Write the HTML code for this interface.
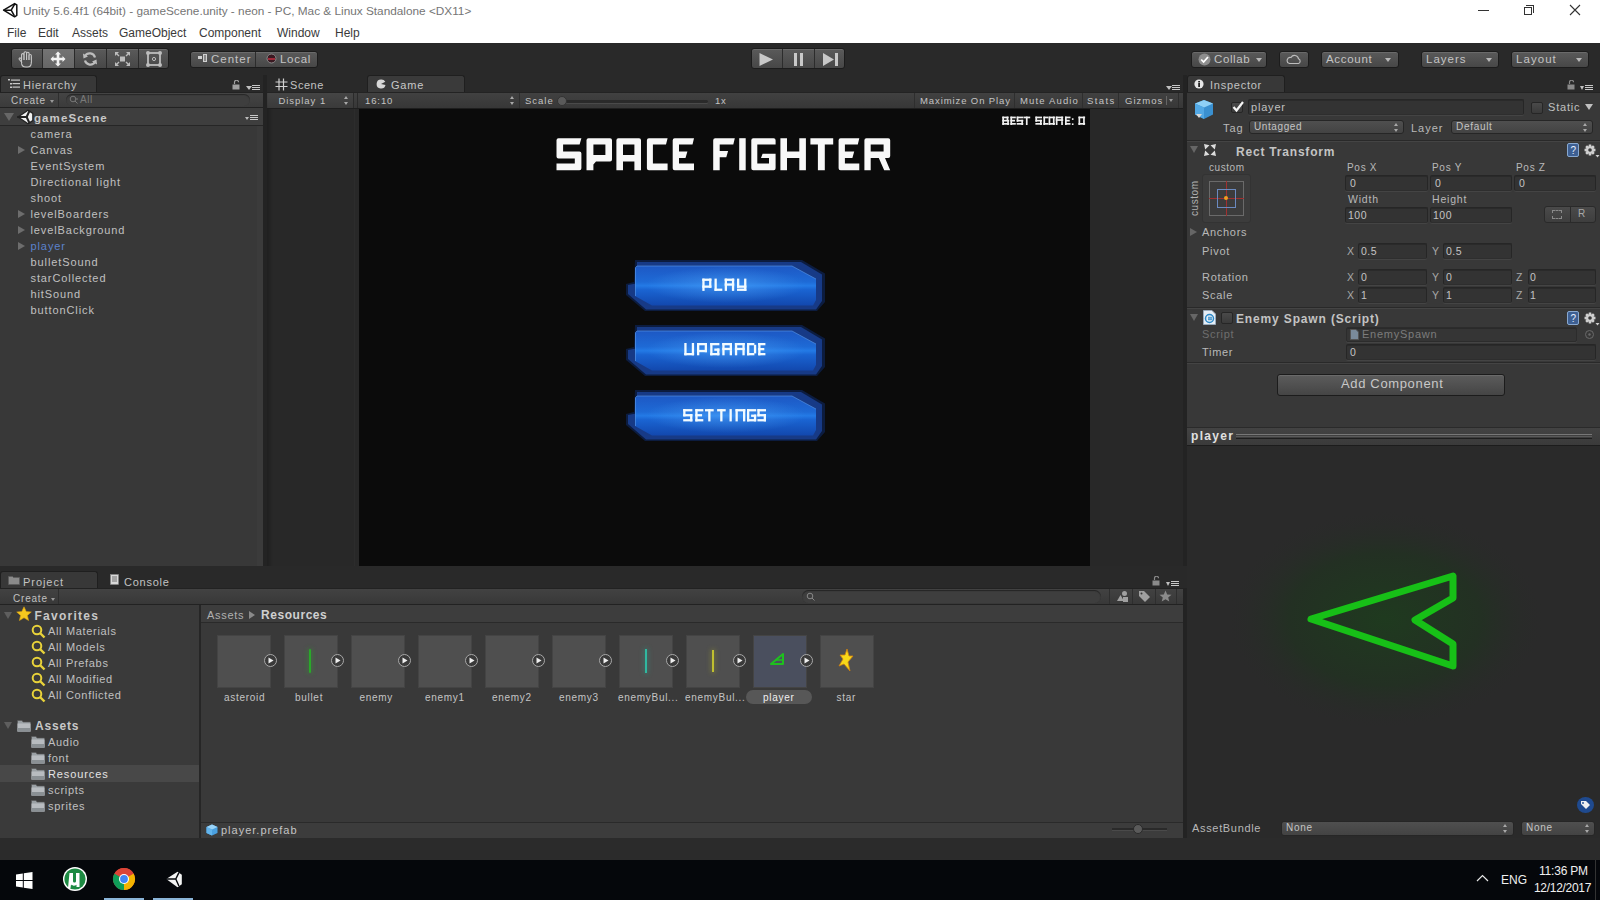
<!DOCTYPE html>
<html><head><meta charset="utf-8">
<style>
*{margin:0;padding:0;box-sizing:border-box}
html,body{width:1600px;height:900px;overflow:hidden;background:#292929;font-family:"Liberation Sans",sans-serif;font-size:11px;color:#b4b4b4}
.a{position:absolute}
.t{position:absolute;white-space:nowrap;line-height:1}
.btn{position:absolute;border-radius:3px;background:linear-gradient(#5a5a5a,#474747);border:1px solid #1c1c1c;box-shadow:inset 0 1px 0 #6a6a6a}
.dd{position:absolute;width:0;height:0;border-left:3px solid transparent;border-right:3px solid transparent;border-top:4px solid #b8b8b8}
.tab{position:absolute;background:#383838;border:1px solid #1f1f1f;border-bottom:none;border-radius:3px 3px 0 0}
.fld{position:absolute;background:#333333;border:1px solid #262626;border-bottom-color:#2e2e2e;border-radius:2px;box-shadow:inset 0 1px 0 #2a2a2a, 0 1px 0 #444}
.pop{position:absolute;background:linear-gradient(#4f4f4f,#434343);border:1px solid #262626;border-radius:3px}
.ud{position:absolute;width:5px;height:9px}
.ud:before{content:"";position:absolute;left:0;top:0;border-left:2.5px solid transparent;border-right:2.5px solid transparent;border-bottom:3px solid #a8a8a8}
.ud:after{content:"";position:absolute;left:0;bottom:0;border-left:2.5px solid transparent;border-right:2.5px solid transparent;border-top:3px solid #a8a8a8}
.fold{position:absolute;width:0;height:0;border-top:4px solid transparent;border-bottom:4px solid transparent;border-left:7px solid #6d6d6d}
.foldd{position:absolute;width:0;height:0;border-left:5px solid transparent;border-right:5px solid transparent;border-top:8px solid #6d6d6d}
.lbl{color:#b4b4b4}
</style></head><body>
<!-- TITLE BAR -->
<div class="a" style="left:0;top:0;width:1600px;height:43px;background:#fff"></div>
<svg class="a" style="left:0;top:0" width="20" height="20"><path d="M3.6 10.2 L14.6 3.6 L16.8 5 V15.4 L14.6 16.8 Z" fill="#fff" stroke="#111" stroke-width="1.5" stroke-linejoin="round"/><path d="M11.2 10.2 L3.6 10.2 M11.2 10.2 L14.4 4.6 M11.2 10.2 L14.4 15.8" stroke="#111" stroke-width="1.5"/></svg>
<div class="t" style="left:23px;top:6px;font-size:11.8px;color:#757575">Unity 5.6.4f1 (64bit) - gameScene.unity - neon - PC, Mac &amp; Linux Standalone &lt;DX11&gt;</div>
<div class="a" style="left:1478px;top:10px;width:11px;height:1px;background:#333"></div>
<div class="a" style="left:1524px;top:7px;width:8px;height:8px;border:1px solid #333;background:#fff"></div>
<div class="a" style="left:1526px;top:5px;width:8px;height:8px;border-top:1px solid #333;border-right:1px solid #333"></div>
<svg class="a" style="left:1569px;top:4px" width="12" height="12"><path d="M1 1L11 11M11 1L1 11" stroke="#333" stroke-width="1.1"/></svg>
<div class="t" style="left:7px;top:27px;font-size:12px;color:#3a3a3a">File</div>
<div class="t" style="left:38px;top:27px;font-size:12px;color:#3a3a3a">Edit</div>
<div class="t" style="left:72px;top:27px;font-size:12px;color:#3a3a3a">Assets</div>
<div class="t" style="left:119px;top:27px;font-size:12px;color:#3a3a3a">GameObject</div>
<div class="t" style="left:199px;top:27px;font-size:12px;color:#3a3a3a">Component</div>
<div class="t" style="left:277px;top:27px;font-size:12px;color:#3a3a3a">Window</div>
<div class="t" style="left:335px;top:27px;font-size:12px;color:#3a3a3a">Help</div>
<!-- TOOLBAR -->
<div class="a" style="left:0;top:43px;width:1600px;height:49px;background:#292929"></div>
<div class="btn" style="left:11px;top:48px;width:158px;height:21px;overflow:hidden">
 <div class="a" style="left:30px;top:0;width:32px;height:21px;background:linear-gradient(#747474,#656565)"></div>
 <div class="a" style="left:30px;top:0;width:1px;height:21px;background:#2a2a2a"></div>
 <div class="a" style="left:62px;top:0;width:1px;height:21px;background:#2a2a2a"></div>
 <div class="a" style="left:94px;top:0;width:1px;height:21px;background:#2a2a2a"></div>
 <div class="a" style="left:126px;top:0;width:1px;height:21px;background:#2a2a2a"></div>
</div>
<!-- tool icons -->
<svg class="a" style="left:17px;top:50px" width="18" height="18" viewBox="0 0 18 18"><g fill="#505050" stroke="#c8c8c8" stroke-width="1.1"><path d="M4.5 12 L2.3 9.3 C1.6 8.4 2.8 7.4 3.6 8.2 L5 9.8 Z"/><path d="M4.6 8 V13 C4.6 15.5 6.5 17 8.8 17 H10.5 C12.8 17 14.2 15.2 14.2 13 V7 Z"/><rect x="4.6" y="3.6" width="2.5" height="9" rx="1.25"/><rect x="7.1" y="1.8" width="2.5" height="10" rx="1.25"/><rect x="9.6" y="2.3" width="2.5" height="10" rx="1.25"/><rect x="12.1" y="4.5" width="2.2" height="8.5" rx="1.1"/></g><rect x="5.2" y="10" width="8.4" height="4" fill="#505050"/></svg>
<svg class="a" style="left:50px;top:51px" width="16" height="16" viewBox="0 0 16 16"><path d="M8 0.5L11 3.5H9.3V6.7H12.5V5L15.5 8L12.5 11V9.3H9.3V12.5H11L8 15.5L5 12.5H6.7V9.3H3.5V11L0.5 8L3.5 5V6.7H6.7V3.5H5Z" fill="#f2f2f2"/></svg>
<svg class="a" style="left:82px;top:51px" width="16" height="16" viewBox="0 0 16 16"><path d="M13 6.5 A5.5 5.5 0 0 0 3 5" fill="none" stroke="#bdbdbd" stroke-width="2.2"/><path d="M3 9.5 A5.5 5.5 0 0 0 13 11" fill="none" stroke="#bdbdbd" stroke-width="2.2"/><path d="M1 2.5 L1.5 7.5 L6 5.5Z M15 13.5 L14.5 8.5 L10 10.5Z" fill="#bdbdbd"/></svg>
<svg class="a" style="left:114px;top:51px" width="17" height="16" viewBox="0 0 17 16"><rect x="6" y="5.5" width="5" height="5" fill="#bdbdbd"/><path d="M1.5 1.5L5 5M15.5 1.5L12 5M1.5 14.5L5 11M15.5 14.5L12 11" stroke="#bdbdbd" stroke-width="1.4"/><path d="M1 1H5L1 5ZM16 1H12L16 5ZM1 15H5L1 11ZM16 15H12L16 11Z" fill="#bdbdbd"/></svg>
<svg class="a" style="left:145px;top:50px" width="18" height="18" viewBox="0 0 18 18"><rect x="3" y="3" width="12" height="12" fill="none" stroke="#bdbdbd" stroke-width="1.8"/><circle cx="3" cy="3" r="2" fill="#bdbdbd"/><circle cx="15" cy="3" r="2" fill="#bdbdbd"/><circle cx="3" cy="15" r="2" fill="#bdbdbd"/><circle cx="15" cy="15" r="2" fill="#bdbdbd"/><circle cx="9" cy="9" r="1.6" fill="none" stroke="#bdbdbd" stroke-width="1"/></svg>
<!-- center/local -->
<div class="btn" style="left:190px;top:51px;width:128px;height:17px">
 <div class="a" style="left:64px;top:0;width:1px;height:15px;background:#2c2c2c"></div>
</div>
<div class="a" style="left:198px;top:56px;width:4px;height:3px;background:#d0d0d0"></div>
<div class="a" style="left:203px;top:54px;width:4px;height:8px;border:1px solid #d0d0d0;background:#888"></div>
<div class="t" style="left:211px;top:54px;font-size:11.5px;letter-spacing:1.0px;color:#c4c4c4">Center</div>
<svg class="a" style="left:266px;top:53px" width="11" height="11"><circle cx="5.5" cy="5.5" r="4.5" fill="#3a1a22" stroke="#8a8a8a" stroke-width="1"/><rect x="2" y="5" width="7" height="2" fill="#a02a3a"/></svg>
<div class="t" style="left:280px;top:54px;font-size:11.5px;letter-spacing:0.7px;color:#c4c4c4">Local</div>
<!-- play -->
<div class="btn" style="left:751px;top:48px;width:94px;height:21px">
 <div class="a" style="left:30px;top:0;width:1px;height:19px;background:#2c2c2c"></div>
 <div class="a" style="left:62px;top:0;width:1px;height:19px;background:#2c2c2c"></div>
</div>
<svg class="a" style="left:758px;top:52px" width="17" height="15"><path d="M1.5 1 L15 7.5 L1.5 14Z" fill="#c8c8c8"/></svg>
<div class="a" style="left:794px;top:53px;width:3px;height:13px;background:#c8c8c8"></div>
<div class="a" style="left:800px;top:53px;width:3px;height:13px;background:#c8c8c8"></div>
<svg class="a" style="left:822px;top:52px" width="17" height="15"><path d="M1 1 L12 7.5 L1 14Z" fill="#c8c8c8"/><rect x="13" y="1" width="3" height="13" fill="#c8c8c8"/></svg>
<!-- right toolbar -->
<div class="btn" style="left:1191px;top:51px;width:76px;height:17px"></div>
<svg class="a" style="left:1198px;top:53px" width="13" height="13"><circle cx="6.5" cy="6.5" r="6" fill="#8e8e8e"/><path d="M3.2 6.5L5.6 9L10 4" fill="none" stroke="#fff" stroke-width="1.8"/></svg>
<div class="t" style="left:1214px;top:54px;font-size:11.5px;letter-spacing:0.6px;color:#c4c4c4">Collab</div>
<div class="dd" style="left:1256px;top:58px"></div>
<div class="btn" style="left:1279px;top:51px;width:30px;height:17px"></div>
<svg class="a" style="left:1286px;top:53px" width="16" height="12"><path d="M3.5 10.5 H12.5 A2.5 2.5 0 0 0 12.5 5.8 A4 4 0 0 0 5 4.5 A3 3 0 0 0 3.5 10.5Z" fill="none" stroke="#bdbdbd" stroke-width="1.1"/></svg>
<div class="btn" style="left:1321px;top:51px;width:78px;height:17px"></div>
<div class="t" style="left:1326px;top:54px;font-size:11.5px;letter-spacing:0.7px;color:#c4c4c4">Account</div>
<div class="dd" style="left:1385px;top:58px"></div>
<div class="btn" style="left:1421px;top:51px;width:78px;height:17px"></div>
<div class="t" style="left:1426px;top:54px;font-size:11.5px;letter-spacing:1.0px;color:#c4c4c4">Layers</div>
<div class="dd" style="left:1486px;top:58px"></div>
<div class="btn" style="left:1511px;top:51px;width:78px;height:17px"></div>
<div class="t" style="left:1516px;top:54px;font-size:11.5px;letter-spacing:1.05px;color:#c4c4c4">Layout</div>
<div class="dd" style="left:1576px;top:58px"></div>
<!-- HIERARCHY -->
<div class="a" style="left:0;top:92px;width:264px;height:474px;background:#383838"></div>
<div class="tab" style="left:0;top:75px;width:97px;height:18px"></div>
<svg class="a" style="left:8px;top:79px" width="12" height="10"><rect x="0" y="0" width="2" height="1.5" fill="#c8c8c8"/><rect x="3" y="0.5" width="9" height="1.2" fill="#c8c8c8"/><rect x="2" y="4" width="2" height="1.5" fill="#c8c8c8"/><rect x="4.5" y="4" width="7.5" height="1.2" fill="#c8c8c8"/><rect x="2" y="7.5" width="2" height="1.5" fill="#c8c8c8"/><rect x="4.5" y="7.5" width="7.5" height="1.2" fill="#c8c8c8"/></svg>
<div class="t" style="left:23px;top:80px;font-size:11px;letter-spacing:0.8px;color:#c2c2c2">Hierarchy</div>
<svg class="a" style="left:232px;top:80px" width="9" height="10"><path d="M2.5 4 V2.2 A2 2 0 0 1 6.5 2.2" fill="none" stroke="#a0a0a0" stroke-width="1.2"/><rect x="0.5" y="4.5" width="7" height="5" fill="#a0a0a0"/></svg>
<div class="dd" style="left:246px;top:86px;border-top-color:#c0c0c0"></div>
<div class="a" style="left:252px;top:85px;width:8px;height:1px;background:#c8c8c8;box-shadow:0 2px 0 #c8c8c8,0 4px 0 #c8c8c8"></div>
<!-- hier toolbar -->
<div class="a" style="left:0;top:92px;width:264px;height:16px;background:linear-gradient(#444,#3b3b3b);border-top:1px solid #222;border-bottom:1px solid #222"></div>
<div class="t" style="left:11px;top:96px;font-size:10px;letter-spacing:0.8px;color:#c0c0c0">Create</div>
<div class="dd" style="left:50px;top:100px;border-left-width:2.5px;border-right-width:2.5px;border-top-width:3px;border-top-color:#999"></div>
<div class="a" style="left:58px;top:93px;width:1px;height:14px;background:#2e2e2e"></div>
<div class="a" style="left:66px;top:94px;width:184px;height:12px;border-radius:6px;background:#3e3e3e;box-shadow:inset 0 1px 1px #262626"></div>
<svg class="a" style="left:69px;top:95px" width="10" height="10"><circle cx="4" cy="4" r="2.8" fill="none" stroke="#777" stroke-width="1"/><path d="M6 6L8.5 8.5M7 4H9" stroke="#777" stroke-width="1"/></svg>
<div class="t" style="left:80px;top:95px;font-size:10px;letter-spacing:0.5px;color:#7a7a7a">All</div>
<!-- scene row -->
<div class="a" style="left:0;top:108px;width:264px;height:18px;background:#3e3e3e;border-bottom:1px solid #262626"></div>
<div class="foldd" style="left:4px;top:113px;border-top-color:#676767"></div>
<svg class="a" style="left:14px;top:105px" width="24" height="24" viewBox="0 0 30 30"><path d="M5 15 L17.5 6.5 L23.5 10.5 V19.5 L17.5 23.5 Z" fill="#f0f0f0" stroke="#222" stroke-width="1.5"/><path d="M15.8 15 L4 15 M15.8 15 L19.5 7 M15.8 15 L19.5 23" stroke="#222" stroke-width="2.6"/></svg>
<div class="t" style="left:34px;top:113px;font-size:11.5px;font-weight:bold;letter-spacing:1.1px;color:#c8c8c8">gameScene</div>
<div class="dd" style="left:245px;top:117px;border-left-width:2.5px;border-right-width:2.5px;border-top-width:3px;border-top-color:#bbb"></div>
<div class="a" style="left:250px;top:115px;width:8px;height:1px;background:#c8c8c8;box-shadow:0 2px 0 #c8c8c8,0 4px 0 #c8c8c8"></div>
<!-- items -->
<div class="t" style="left:30.5px;top:129px;font-size:11px;letter-spacing:0.9px;color:#c0c0c0">camera</div>
<div class="fold" style="left:18px;top:146px"></div>
<div class="t" style="left:30.5px;top:145px;font-size:11px;letter-spacing:0.9px;color:#c0c0c0">Canvas</div>
<div class="t" style="left:30.5px;top:161px;font-size:11px;letter-spacing:0.9px;color:#c0c0c0">EventSystem</div>
<div class="t" style="left:30.5px;top:177px;font-size:11px;letter-spacing:0.9px;color:#c0c0c0">Directional light</div>
<div class="t" style="left:30.5px;top:193px;font-size:11px;letter-spacing:0.9px;color:#c0c0c0">shoot</div>
<div class="fold" style="left:18px;top:210px"></div>
<div class="t" style="left:30.5px;top:209px;font-size:11px;letter-spacing:0.9px;color:#c0c0c0">levelBoarders</div>
<div class="fold" style="left:18px;top:226px"></div>
<div class="t" style="left:30.5px;top:225px;font-size:11px;letter-spacing:0.9px;color:#c0c0c0">levelBackground</div>
<div class="fold" style="left:18px;top:242px"></div>
<div class="t" style="left:30.5px;top:241px;font-size:11px;letter-spacing:0.9px;color:#5b82cc">player</div>
<div class="t" style="left:30.5px;top:257px;font-size:11px;letter-spacing:0.9px;color:#c0c0c0">bulletSound</div>
<div class="t" style="left:30.5px;top:273px;font-size:11px;letter-spacing:0.9px;color:#c0c0c0">starCollected</div>
<div class="t" style="left:30.5px;top:289px;font-size:11px;letter-spacing:0.9px;color:#c0c0c0">hitSound</div>
<div class="t" style="left:30.5px;top:305px;font-size:11px;letter-spacing:0.9px;color:#c0c0c0">buttonClick</div>
<div class="a" style="left:257px;top:126px;width:6px;height:440px;background:#3b3b3b"></div>
<div class="a" style="left:263px;top:75px;width:4px;height:491px;background:#232323"></div>
<!-- GAME PANEL -->
<svg class="a" style="left:275px;top:78px" width="13" height="13"><path d="M4 0.5V12.5M8.5 0.5V12.5M0.5 4H12.5M0.5 8.5H12.5" stroke="#d0d0d0" stroke-width="1.2"/></svg>
<div class="t" style="left:290px;top:80px;font-size:11px;letter-spacing:0.55px;color:#c2c2c2">Scene</div>
<div class="tab" style="left:367px;top:75px;width:98px;height:18px;background:#3a3a3a"></div>
<svg class="a" style="left:376px;top:79px" width="10" height="10"><path d="M5 0.5 A4.5 4.5 0 1 0 9.5 6 L5 5 L9.3 2.8 A4.5 4.5 0 0 0 5 0.5Z" fill="#d8d8d8"/></svg>
<div class="t" style="left:391px;top:80px;font-size:11px;letter-spacing:0.8px;color:#c8c8c8">Game</div>
<div class="dd" style="left:1166px;top:86px;border-top-color:#c0c0c0"></div>
<div class="a" style="left:1172px;top:85px;width:8px;height:1px;background:#c8c8c8;box-shadow:0 2px 0 #c8c8c8,0 4px 0 #c8c8c8"></div>
<!-- game toolbar -->
<div class="a" style="left:267px;top:92px;width:916px;height:17px;background:linear-gradient(#414141,#373737);border-top:1px solid #232323;border-bottom:1px solid #1e1e1e"></div>
<div class="a" style="left:268px;top:93px;width:85px;height:15px;background:linear-gradient(#454545,#3a3a3a)"></div>
<div class="a" style="left:353px;top:93px;width:1px;height:15px;background:#2a2a2a"></div>
<div class="a" style="left:357px;top:93px;width:1px;height:15px;background:#2a2a2a"></div>
<div class="t" style="left:278.5px;top:96px;font-size:9.5px;letter-spacing:0.95px;color:#c4c4c4">Display 1</div>
<div class="ud" style="left:344px;top:96px"></div>
<div class="t" style="left:365px;top:96px;font-size:9.5px;letter-spacing:0.9px;color:#c4c4c4">16:10</div>
<div class="ud" style="left:510px;top:96px"></div>
<div class="a" style="left:519px;top:93px;width:1px;height:15px;background:#2e2e2e"></div>
<div class="t" style="left:525px;top:96px;font-size:9.5px;letter-spacing:1.0px;color:#c4c4c4">Scale</div>
<div class="a" style="left:560px;top:100px;width:148px;height:3px;border-radius:2px;background:#2a2a2a;box-shadow:0 1px 0 #4a4a4a"></div>
<div class="a" style="left:557px;top:96px;width:10px;height:10px;border-radius:50%;background:#5a5a5a;border:1px solid #333"></div>
<div class="t" style="left:715px;top:96px;font-size:9.5px;letter-spacing:0.6px;color:#c4c4c4">1x</div>
<div class="a" style="left:914px;top:93px;width:1px;height:15px;background:#2e2e2e"></div>
<div class="t" style="left:920px;top:96px;font-size:9.5px;letter-spacing:0.9px;color:#c4c4c4">Maximize On Play</div>
<div class="a" style="left:1014px;top:93px;width:1px;height:15px;background:#2e2e2e"></div>
<div class="t" style="left:1020px;top:96px;font-size:9.5px;letter-spacing:1.15px;color:#c4c4c4">Mute Audio</div>
<div class="a" style="left:1082px;top:93px;width:1px;height:15px;background:#2e2e2e"></div>
<div class="t" style="left:1087px;top:96px;font-size:9.5px;letter-spacing:1.4px;color:#c4c4c4">Stats</div>
<div class="a" style="left:1118px;top:93px;width:1px;height:15px;background:#2e2e2e"></div>
<div class="t" style="left:1125px;top:96px;font-size:9.5px;letter-spacing:1.0px;color:#c4c4c4">Gizmos</div>
<div class="a" style="left:1166px;top:96px;width:1px;height:9px;background:#666"></div>
<div class="dd" style="left:1169px;top:99px;border-left-width:2.5px;border-right-width:2.5px;border-top-width:3px;border-top-color:#999"></div>
<div class="a" style="left:1178px;top:93px;width:1px;height:15px;background:#2e2e2e"></div>
<!-- game view area -->
<div class="a" style="left:267px;top:109px;width:916px;height:457px;background:#282828"></div>
<div class="a" style="left:267px;top:109px;width:6px;height:457px;background:linear-gradient(90deg,#1f1f1f,#282828)"></div>
<div class="a" style="left:354px;top:109px;width:1px;height:457px;background:#2c2c2c"></div>
<div class="a" style="left:359px;top:109px;width:731px;height:457px;background:#0b0b0b"></div>
<div class="a" style="left:1183px;top:75px;width:4px;height:491px;background:#232323"></div>
<svg class="a" style="left:0;top:0" width="1600" height="900" fill="#f0f0f0"><rect x="1002.3" y="116.6" width="1.7" height="8.4"/><rect x="1002.3" y="116.6" width="6.3" height="1.7"/><rect x="1002.3" y="119.8" width="6.9" height="1.7"/><rect x="1002.3" y="123.0" width="6.9" height="1.7"/><rect x="1006.6" y="116.6" width="1.7" height="4.2"/><rect x="1007.2" y="120.8" width="1.7" height="4.2"/><rect x="1010.4" y="116.6" width="1.7" height="8.4"/><rect x="1010.4" y="116.6" width="5.4" height="1.7"/><rect x="1010.4" y="119.8" width="4.6" height="1.7"/><rect x="1010.4" y="123.0" width="5.4" height="1.7"/><rect x="1016.7" y="116.6" width="6.6" height="1.7"/><rect x="1016.7" y="116.6" width="1.7" height="5.2"/><rect x="1016.7" y="119.8" width="6.6" height="1.7"/><rect x="1021.3" y="119.8" width="1.7" height="5.2"/><rect x="1016.7" y="123.0" width="6.6" height="1.7"/><rect x="1023.6" y="116.6" width="6.6" height="1.7"/><rect x="1025.9" y="116.6" width="1.7" height="8.4"/><rect x="1035.4" y="116.6" width="6.6" height="1.7"/><rect x="1035.4" y="116.6" width="1.7" height="5.2"/><rect x="1035.4" y="119.8" width="6.6" height="1.7"/><rect x="1040.0" y="119.8" width="1.7" height="5.2"/><rect x="1035.4" y="123.0" width="6.6" height="1.7"/><rect x="1043.4" y="116.6" width="1.7" height="8.4"/><rect x="1043.4" y="116.6" width="4.8" height="1.7"/><rect x="1043.4" y="123.0" width="4.8" height="1.7"/><rect x="1048.6" y="116.6" width="1.7" height="8.4"/><rect x="1052.9" y="116.6" width="1.7" height="8.4"/><rect x="1048.6" y="116.6" width="6.3" height="1.7"/><rect x="1048.6" y="123.0" width="6.3" height="1.7"/><rect x="1055.8" y="116.6" width="1.7" height="8.4"/><rect x="1055.8" y="116.6" width="7.4" height="1.7"/><rect x="1061.2" y="116.6" width="1.7" height="4.6"/><rect x="1055.8" y="119.2" width="7.4" height="1.7"/><rect x="1061.2" y="121.2" width="1.7" height="3.8"/><rect x="1065.0" y="116.6" width="1.7" height="8.4"/><rect x="1065.0" y="116.6" width="5.5" height="1.7"/><rect x="1065.0" y="119.8" width="4.7" height="1.7"/><rect x="1065.0" y="123.0" width="5.5" height="1.7"/><rect x="1071.9" y="118.3" width="1.6" height="1.6"/><rect x="1071.9" y="123.4" width="1.6" height="1.6"/><rect x="1078.5" y="116.6" width="1.7" height="8.4"/><rect x="1083.1" y="116.6" width="1.7" height="8.4"/><rect x="1078.5" y="116.6" width="6.6" height="1.7"/><rect x="1078.5" y="123.0" width="6.6" height="1.7"/></svg>
<svg class="a" style="left:550px;top:130px" width="350" height="50" fill="#f8f8f8">
<path d="M8.5 8.2H31.4L29.6 14.5H13.1V21.4H29.4Q31.4 21.4 31.4 23.4V38.3Q31.4 40.3 29.4 40.3H6.5V33.4H24.8V28.6H8.5Q6.5 28.6 6.5 26.6V10.2Q6.5 8.2 8.5 8.2Z"/>
<path fill-rule="evenodd" d="M38.5 8.2H60Q62 8.2 62 10.2V29.6Q62 31.6 60 31.6H46L43.4 34.5V40.3H36.5V10.2Q36.5 8.2 38.5 8.2ZM43.4 14.5V25H55.4V14.5Z"/>
<path fill-rule="evenodd" d="M68.4 8.2H89Q91 8.2 91 10.2V40.3H84.4V31.6H73V40.3H66.4V10.2Q66.4 8.2 68.4 8.2ZM73 14.5V25H84.4V14.5Z"/>
<path d="M98.9 8.2H117.6L116 14.5H102.9V33.4H117.6V40.3H98.9Q96.9 40.3 96.9 38.3V10.2Q96.9 8.2 98.9 8.2Z"/>
<path d="M124.7 8.2H144L142.5 14.5H129V21.4H137.4L135.5 28H129V33.4H144V40.3H124.7Q122.7 40.3 122.7 38.3V10.2Q122.7 8.2 124.7 8.2Z"/>
<path d="M165.2 8.2H184.8L183.3 14.4H169.7V20.9H178.1L176.3 27.3H169.7V40.3H163.2V10.2Q163.2 8.2 165.2 8.2Z"/>
<path d="M189.2 8.2H195.7V40.3H189.2Z"/>
<path d="M203.3 8.2H223.6Q225.6 8.2 225.6 10.2V14.5H207.3V33.4H219V28H211L212.6 23.8H225.6V38.3Q225.6 40.3 223.6 40.3H203.3Q201.3 40.3 201.3 38.3V10.2Q201.3 8.2 203.3 8.2Z"/>
<path d="M230.4 8.2H237V21.4H249.3V8.2H255.9V40.3H249.3V28H237V40.3H230.4Z"/>
<path d="M260.4 8.2H283.2V14.5H274.8V40.3H267.9V14.5H260.4Z"/>
<path d="M290.6 8.2H309.3L307.8 14.5H294.9V21.4H304.2L302.4 28H294.9V33.4H309.3V40.3H290.6Q288.6 40.3 288.6 38.3V10.2Q288.6 8.2 290.6 8.2Z"/>
<path fill-rule="evenodd" d="M316.4 8.2H338.2Q340.2 8.2 340.2 10.2V26Q340.2 28 338.2 28H335L340.2 40.3H334.2L328.8 28H320.7V40.3H314.4V10.2Q314.4 8.2 316.4 8.2ZM320.7 14.5V21.4H333.6V14.5Z"/>
</svg>
<!-- menu buttons -->
<svg class="a" style="left:620px;top:255px" width="215" height="195" viewBox="0 0 215 195">
<defs>
<linearGradient id="bg1" x1="0" y1="0" x2="0" y2="1"><stop offset="0" stop-color="#1d58c4"/><stop offset="0.4" stop-color="#1e6ad6"/><stop offset="0.5" stop-color="#237ae6"/><stop offset="0.6" stop-color="#1a64d2"/><stop offset="1" stop-color="#1248ae"/></linearGradient>
<radialGradient id="bg2" cx="0.5" cy="0.5" r="0.5"><stop offset="0" stop-color="#5ab0ff" stop-opacity="0.45"/><stop offset="1" stop-color="#5ab0ff" stop-opacity="0"/></radialGradient>
<g id="mb">
<path d="M15 5 H182 L205 18.5 V47 L197 56 H25 L6 40 V29 L14 27 Z" fill="#0d2456" opacity="0.7"/>
<path d="M17 7 H181 L202 19.5 V46 L196 54.5 H26 L8 39 V30 L16 28.5 Z" fill="#173a86"/>
<path d="M17 11 H172 L196 24 V45 L193 50.5 H32 L15 41 V13 Z" fill="url(#bg1)"/>
<ellipse cx="106" cy="30" rx="80" ry="18" fill="url(#bg2)"/>
<path d="M15.5 41 V12.5 L17 11 H172 L196 24" fill="none" stroke="#5a9aea" stroke-width="1" opacity="0.6"/>
</g>
</defs>
<use href="#mb" x="0" y="0"/>
<use href="#mb" x="0" y="65"/>
<use href="#mb" x="0" y="130"/>
</svg>
<svg class="a" style="left:0;top:0" width="1600" height="900" fill="#f2fbff"><rect x="702.3" y="278.6" width="2.3" height="12.3"/><rect x="702.3" y="278.6" width="9.1" height="2.3"/><rect x="709.1" y="278.6" width="2.3" height="9.2"/><rect x="702.3" y="285.5" width="9.1" height="2.3"/><rect x="714.5" y="278.6" width="2.3" height="12.3"/><rect x="714.5" y="288.6" width="7.8" height="2.3"/><rect x="724.7" y="278.6" width="2.3" height="12.3"/><rect x="731.9" y="278.6" width="2.3" height="12.3"/><rect x="724.7" y="278.6" width="9.5" height="2.3"/><rect x="724.7" y="283.4" width="9.5" height="2.3"/><rect x="737.0" y="278.6" width="2.3" height="9.2"/><rect x="737.0" y="285.5" width="9.4" height="2.3"/><rect x="744.1" y="278.6" width="2.3" height="12.3"/><rect x="737.0" y="288.6" width="9.4" height="2.3"/><rect x="684.3" y="343.0" width="2.3" height="12.3"/><rect x="691.8" y="343.0" width="2.3" height="12.3"/><rect x="684.3" y="353.0" width="9.8" height="2.3"/><rect x="697.0" y="343.0" width="2.3" height="12.3"/><rect x="697.0" y="343.0" width="10.0" height="2.3"/><rect x="704.7" y="343.0" width="2.3" height="9.2"/><rect x="697.0" y="349.9" width="10.0" height="2.3"/><rect x="710.2" y="343.0" width="2.3" height="12.3"/><rect x="710.2" y="343.0" width="9.2" height="2.3"/><rect x="710.2" y="353.0" width="9.2" height="2.3"/><rect x="717.1" y="348.5" width="2.3" height="6.8"/><rect x="714.3" y="348.5" width="5.1" height="2.3"/><rect x="722.3" y="343.0" width="2.3" height="12.3"/><rect x="722.3" y="343.0" width="9.7" height="2.3"/><rect x="729.7" y="343.0" width="2.3" height="7.1"/><rect x="722.3" y="347.8" width="9.7" height="2.3"/><rect x="729.7" y="350.1" width="2.3" height="5.2"/><rect x="734.9" y="343.0" width="2.3" height="12.3"/><rect x="742.4" y="343.0" width="2.3" height="12.3"/><rect x="734.9" y="343.0" width="9.8" height="2.3"/><rect x="734.9" y="347.8" width="9.8" height="2.3"/><rect x="747.0" y="343.0" width="2.3" height="12.3"/><rect x="747.0" y="343.0" width="7.4" height="2.3"/><rect x="747.0" y="353.0" width="7.4" height="2.3"/><rect x="753.9" y="344.8" width="2.3" height="8.6"/><rect x="758.2" y="343.0" width="2.3" height="12.3"/><rect x="758.2" y="343.0" width="7.2" height="2.3"/><rect x="758.2" y="348.0" width="6.1" height="2.3"/><rect x="758.2" y="353.0" width="7.2" height="2.3"/><rect x="683.2" y="409.1" width="9.2" height="2.3"/><rect x="683.2" y="409.1" width="2.3" height="7.3"/><rect x="683.2" y="414.1" width="9.2" height="2.3"/><rect x="690.1" y="414.1" width="2.3" height="7.3"/><rect x="683.2" y="419.1" width="9.2" height="2.3"/><rect x="695.3" y="409.1" width="2.3" height="12.3"/><rect x="695.3" y="409.1" width="8.0" height="2.3"/><rect x="695.3" y="414.1" width="6.8" height="2.3"/><rect x="695.3" y="419.1" width="8.0" height="2.3"/><rect x="705.0" y="409.1" width="8.7" height="2.3"/><rect x="708.2" y="409.1" width="2.3" height="12.3"/><rect x="717.1" y="409.1" width="8.6" height="2.3"/><rect x="720.2" y="409.1" width="2.3" height="12.3"/><rect x="729.5" y="409.1" width="2.3" height="12.3"/><rect x="735.5" y="409.1" width="2.3" height="12.3"/><rect x="735.5" y="409.1" width="9.8" height="2.3"/><rect x="743.0" y="409.1" width="2.3" height="12.3"/><rect x="747.0" y="409.1" width="2.3" height="12.3"/><rect x="747.0" y="409.1" width="9.2" height="2.3"/><rect x="747.0" y="419.1" width="9.2" height="2.3"/><rect x="753.9" y="414.6" width="2.3" height="6.8"/><rect x="751.1" y="414.6" width="5.1" height="2.3"/><rect x="757.4" y="409.1" width="8.6" height="2.3"/><rect x="757.4" y="409.1" width="2.3" height="7.3"/><rect x="757.4" y="414.1" width="8.6" height="2.3"/><rect x="763.7" y="414.1" width="2.3" height="7.3"/><rect x="757.4" y="419.1" width="8.6" height="2.3"/></svg>
<!-- INSPECTOR -->
<div class="a" style="left:1187px;top:92px;width:413px;height:353px;background:#383838"></div>
<div class="tab" style="left:1187px;top:75px;width:98px;height:18px"></div>
<svg class="a" style="left:1194px;top:79px" width="10" height="10"><circle cx="5" cy="5" r="4.6" fill="#e8e8e8"/><rect x="4.2" y="4" width="1.8" height="4" fill="#222"/><rect x="4.2" y="2" width="1.8" height="1.5" fill="#222"/></svg>
<div class="t" style="left:1210px;top:80px;font-size:11px;letter-spacing:0.75px;color:#c2c2c2">Inspector</div>
<svg class="a" style="left:1567px;top:80px" width="9" height="10"><path d="M2.5 4 V2.2 A2 2 0 0 1 6.5 2.2" fill="none" stroke="#8a8a8a" stroke-width="1.2"/><rect x="0.5" y="4.5" width="7" height="5" fill="#8a8a8a"/></svg>
<div class="dd" style="left:1580px;top:86px;border-left-width:2.5px;border-right-width:2.5px;border-top-color:#c0c0c0"></div>
<div class="a" style="left:1585px;top:85px;width:8px;height:1px;background:#c8c8c8;box-shadow:0 2px 0 #c8c8c8,0 4px 0 #c8c8c8"></div>
<div class="a" style="left:1187px;top:92px;width:413px;height:1px;background:#232323"></div>
<!-- header -->
<svg class="a" style="left:1193px;top:98px" width="23" height="23" viewBox="0 0 23 23"><path d="M11 2 L20 5.5 L20 16.5 L11 21 L2 16.5 L2 5.5Z" fill="#3a90d0"/><path d="M11 2 L20 5.5 L11 9.5 L2 5.5Z" fill="#8ed0f6"/><path d="M2 5.5 L11 9.5 L11 21 L2 16.5Z" fill="#52a8e4"/><path d="M3 16 L9 16 L6 20Z" fill="#d8d8d8"/></svg>
<div class="a" style="left:1231px;top:102px;width:12px;height:11px;border:1px solid #262626;border-radius:2px;background:linear-gradient(#4a4a4a,#3c3c3c)"></div>
<svg class="a" style="left:1231px;top:100px" width="14" height="13"><path d="M2.5 7 L5.5 10.5 L12 2" fill="none" stroke="#f4f4f4" stroke-width="2.2"/></svg>
<div class="fld" style="left:1248px;top:99px;width:276px;height:16px;background:#333"></div>
<div class="t" style="left:1251px;top:102px;font-size:11px;letter-spacing:0.8px;color:#c0c0c0">player</div>
<div class="a" style="left:1531px;top:102px;width:12px;height:12px;border:1px solid #262626;border-radius:2px;background:linear-gradient(#4a4a4a,#3a3a3a)"></div>
<div class="t" style="left:1548px;top:102px;font-size:11px;letter-spacing:0.8px;color:#c0c0c0">Static</div>
<div class="dd" style="left:1585px;top:104px;border-left-width:4px;border-right-width:4px;border-top-width:6px;border-top-color:#c0c0c0"></div>
<div class="t" style="left:1223px;top:123px;font-size:11px;letter-spacing:1px;color:#b8b8b8">Tag</div>
<div class="pop" style="left:1249px;top:120px;width:155px;height:14px"></div>
<div class="t" style="left:1254px;top:122px;font-size:10px;letter-spacing:0.6px;color:#c4c4c4">Untagged</div>
<div class="ud" style="left:1394px;top:123px"></div>
<div class="t" style="left:1411px;top:123px;font-size:11px;letter-spacing:1px;color:#b8b8b8">Layer</div>
<div class="pop" style="left:1451px;top:120px;width:142px;height:14px"></div>
<div class="t" style="left:1456px;top:122px;font-size:10px;letter-spacing:0.7px;color:#c4c4c4">Default</div>
<div class="ud" style="left:1583px;top:123px"></div>
<div class="a" style="left:1187px;top:140px;width:413px;height:1px;background:#292929;box-shadow:0 1px 0 #444"></div>
<!-- rect transform -->
<div class="foldd" style="left:1190px;top:146px;border-left-width:4.5px;border-right-width:4.5px;border-top-width:7px;border-top-color:#666"></div>
<svg class="a" style="left:1202px;top:142px" width="16" height="16"><path d="M2 2 L7.5 3.2 L3.2 7.5Z M14 2 L12.8 7.5 L8.5 3.2Z M2 14 L3.2 8.5 L7.5 12.8Z M14 14 L8.5 12.8 L12.8 8.5Z" fill="#dcdcdc"/></svg>
<div class="t" style="left:1236px;top:146px;font-size:12px;font-weight:bold;letter-spacing:0.8px;color:#c4c4c4">Rect Transform</div>
<svg class="a" style="left:1567px;top:143px" width="13" height="14"><rect x="0.5" y="0.5" width="11" height="13" rx="1.5" fill="#3d5f92" stroke="#88a8d0"/><text x="3.5" y="11" font-size="10" fill="#e8f0ff" font-family="Liberation Sans">?</text></svg>
<svg class="a" style="left:1584px;top:144px" width="16" height="15"><path d="M11.47 4.78 L11.47 7.22 L9.62 7.45 L9.58 7.54 L10.73 9.00 L9.00 10.73 L7.54 9.58 L7.45 9.62 L7.22 11.47 L4.78 11.47 L4.55 9.62 L4.46 9.58 L3.00 10.73 L1.27 9.00 L2.42 7.54 L2.38 7.45 L0.53 7.22 L0.53 4.78 L2.38 4.55 L2.42 4.46 L1.27 3.00 L3.00 1.27 L4.46 2.42 L4.55 2.38 L4.78 0.53 L7.22 0.53 L7.45 2.38 L7.54 2.42 L9.00 1.27 L10.73 3.00 L9.58 4.46 L9.62 4.55Z" fill="#cfcfcf"/><circle cx="6" cy="6" r="1.8" fill="#383838"/><path d="M11.5 11 L15.5 11 L13.5 13.5Z" fill="#cfcfcf"/></svg>
<div class="t" style="left:1209px;top:163px;font-size:10px;letter-spacing:0.55px;color:#b8b8b8">custom</div>
<div class="t" style="left:1190px;top:216px;font-size:10px;letter-spacing:0.55px;color:#b0b0b0;transform:rotate(-90deg);transform-origin:0 0">custom</div>
<div class="a" style="left:1202px;top:174px;width:49px;height:49px;background:#3c3c3c;border:1px solid #333;border-radius:3px"></div>
<div class="a" style="left:1209px;top:181px;width:35px;height:35px;border:1px solid #6a6a6a"></div>
<div class="a" style="left:1226px;top:181px;width:1px;height:35px;background:#a03030"></div>
<div class="a" style="left:1209px;top:198px;width:35px;height:1px;background:#a03030"></div>
<div class="a" style="left:1217px;top:189px;width:19px;height:19px;border:1px solid #6b8ac0"></div>
<div class="a" style="left:1224px;top:196px;width:4px;height:4px;border-radius:50%;background:#f0a020"></div>
<div class="t" style="left:1347px;top:163px;font-size:10px;letter-spacing:0.7px;color:#b8b8b8">Pos X</div>
<div class="t" style="left:1432px;top:163px;font-size:10px;letter-spacing:0.7px;color:#b8b8b8">Pos Y</div>
<div class="t" style="left:1516px;top:163px;font-size:10px;letter-spacing:0.7px;color:#b8b8b8">Pos Z</div>
<div class="fld" style="left:1345px;top:175px;width:83px;height:16px"></div>
<div class="fld" style="left:1430px;top:175px;width:82px;height:16px"></div>
<div class="fld" style="left:1514px;top:175px;width:82px;height:16px"></div>
<div class="t" style="left:1350px;top:178px;font-size:10.5px;color:#c4c4c4">0</div>
<div class="t" style="left:1435px;top:178px;font-size:10.5px;color:#c4c4c4">0</div>
<div class="t" style="left:1519px;top:178px;font-size:10.5px;color:#c4c4c4">0</div>
<div class="t" style="left:1348px;top:194px;font-size:10.5px;letter-spacing:0.8px;color:#b8b8b8">Width</div>
<div class="t" style="left:1432px;top:194px;font-size:10.5px;letter-spacing:0.8px;color:#b8b8b8">Height</div>
<div class="fld" style="left:1345px;top:207px;width:83px;height:16px"></div>
<div class="fld" style="left:1430px;top:207px;width:82px;height:16px"></div>
<div class="t" style="left:1348px;top:210px;font-size:10.5px;letter-spacing:0.5px;color:#c4c4c4">100</div>
<div class="t" style="left:1433px;top:210px;font-size:10.5px;letter-spacing:0.5px;color:#c4c4c4">100</div>
<div class="btn" style="left:1544px;top:206px;width:52px;height:17px;background:linear-gradient(#4a4a4a,#3e3e3e);box-shadow:none;border-color:#2a2a2a"></div>
<div class="a" style="left:1570px;top:207px;width:1px;height:15px;background:#2a2a2a"></div>
<div class="a" style="left:1552px;top:210px;width:10px;height:9px;border:1px dashed #8a8a8a"></div>
<div class="t" style="left:1578px;top:209px;font-size:10px;color:#a8a8a8">R</div>
<div class="fold" style="left:1190px;top:228px;border-left-width:7px;border-top-width:4.5px;border-bottom-width:4.5px;border-left-color:#666"></div>
<div class="t" style="left:1202px;top:227px;font-size:11px;letter-spacing:0.7px;color:#b8b8b8">Anchors</div>
<div class="t" style="left:1202px;top:246px;font-size:11px;letter-spacing:0.7px;color:#b8b8b8">Pivot</div>
<div class="t" style="left:1347px;top:246px;font-size:10.5px;color:#a8a8a8">X</div>
<div class="fld" style="left:1358px;top:243px;width:69px;height:16px"></div>
<div class="t" style="left:1361px;top:246px;font-size:10.5px;letter-spacing:0.5px;color:#c4c4c4">0.5</div>
<div class="t" style="left:1432px;top:246px;font-size:10.5px;color:#a8a8a8">Y</div>
<div class="fld" style="left:1443px;top:243px;width:69px;height:16px"></div>
<div class="t" style="left:1446px;top:246px;font-size:10.5px;letter-spacing:0.5px;color:#c4c4c4">0.5</div>
<div class="t" style="left:1202px;top:272px;font-size:11px;letter-spacing:0.7px;color:#b8b8b8">Rotation</div>
<div class="t" style="left:1347px;top:272px;font-size:10.5px;color:#a8a8a8">X</div>
<div class="fld" style="left:1358px;top:269px;width:69px;height:16px"></div>
<div class="t" style="left:1361px;top:272px;font-size:10.5px;color:#c4c4c4">0</div>
<div class="t" style="left:1432px;top:272px;font-size:10.5px;color:#a8a8a8">Y</div>
<div class="fld" style="left:1443px;top:269px;width:69px;height:16px"></div>
<div class="t" style="left:1446px;top:272px;font-size:10.5px;color:#c4c4c4">0</div>
<div class="t" style="left:1516px;top:272px;font-size:10.5px;color:#a8a8a8">Z</div>
<div class="fld" style="left:1528px;top:269px;width:68px;height:16px"></div>
<div class="t" style="left:1530px;top:272px;font-size:10.5px;color:#c4c4c4">0</div>
<div class="t" style="left:1202px;top:290px;font-size:11px;letter-spacing:0.7px;color:#b8b8b8">Scale</div>
<div class="t" style="left:1347px;top:290px;font-size:10.5px;color:#a8a8a8">X</div>
<div class="fld" style="left:1358px;top:287px;width:69px;height:16px"></div>
<div class="t" style="left:1361px;top:290px;font-size:10.5px;color:#c4c4c4">1</div>
<div class="t" style="left:1432px;top:290px;font-size:10.5px;color:#a8a8a8">Y</div>
<div class="fld" style="left:1443px;top:287px;width:69px;height:16px"></div>
<div class="t" style="left:1446px;top:290px;font-size:10.5px;color:#c4c4c4">1</div>
<div class="t" style="left:1516px;top:290px;font-size:10.5px;color:#a8a8a8">Z</div>
<div class="fld" style="left:1528px;top:287px;width:68px;height:16px"></div>
<div class="t" style="left:1530px;top:290px;font-size:10.5px;color:#c4c4c4">1</div>
<div class="a" style="left:1187px;top:307px;width:413px;height:1px;background:#292929;box-shadow:0 1px 0 #444"></div>
<!-- enemy spawn -->
<div class="foldd" style="left:1190px;top:314px;border-left-width:4.5px;border-right-width:4.5px;border-top-width:7px;border-top-color:#666"></div>
<svg class="a" style="left:1203px;top:310px" width="13" height="15"><path d="M0.5 0.5H9L12.5 4V14.5H0.5Z" fill="#e6eef6" stroke="#9ab"/><circle cx="6.5" cy="8.5" r="4" fill="none" stroke="#2a88c8" stroke-width="1.5"/><path d="M6 6.5V10.5M8 6.5V10.5M5 7.8H9M5 9.3H9" stroke="#2a88c8" stroke-width="0.8"/></svg>
<div class="a" style="left:1221px;top:312px;width:12px;height:12px;border:1px solid #262626;border-radius:2px;background:linear-gradient(#4a4a4a,#3a3a3a)"></div>
<div class="t" style="left:1236px;top:313px;font-size:12px;font-weight:bold;letter-spacing:0.85px;color:#c4c4c4">Enemy Spawn (Script)</div>
<svg class="a" style="left:1567px;top:311px" width="13" height="14"><rect x="0.5" y="0.5" width="11" height="13" rx="1.5" fill="#3d5f92" stroke="#88a8d0"/><text x="3.5" y="11" font-size="10" fill="#e8f0ff" font-family="Liberation Sans">?</text></svg>
<svg class="a" style="left:1584px;top:312px" width="16" height="15"><path d="M11.47 4.78 L11.47 7.22 L9.62 7.45 L9.58 7.54 L10.73 9.00 L9.00 10.73 L7.54 9.58 L7.45 9.62 L7.22 11.47 L4.78 11.47 L4.55 9.62 L4.46 9.58 L3.00 10.73 L1.27 9.00 L2.42 7.54 L2.38 7.45 L0.53 7.22 L0.53 4.78 L2.38 4.55 L2.42 4.46 L1.27 3.00 L3.00 1.27 L4.46 2.42 L4.55 2.38 L4.78 0.53 L7.22 0.53 L7.45 2.38 L7.54 2.42 L9.00 1.27 L10.73 3.00 L9.58 4.46 L9.62 4.55Z" fill="#cfcfcf"/><circle cx="6" cy="6" r="1.8" fill="#383838"/><path d="M11.5 11 L15.5 11 L13.5 13.5Z" fill="#cfcfcf"/></svg>
<div class="t" style="left:1202px;top:329px;font-size:11px;letter-spacing:0.7px;color:#6e6e6e">Script</div>
<div class="fld" style="left:1346px;top:327px;width:231px;height:15px;background:#353535;border-color:#2c2c2c"></div>
<svg class="a" style="left:1350px;top:329px" width="9" height="11"><path d="M0.5 0.5H6L8.5 3V10.5H0.5Z" fill="#7a8a9a" stroke="#555"/></svg>
<div class="t" style="left:1362px;top:329px;font-size:11px;letter-spacing:0.75px;color:#7c7c7c">EnemySpawn</div>
<svg class="a" style="left:1584px;top:329px" width="11" height="11"><circle cx="5.5" cy="5.5" r="4" fill="none" stroke="#6a6a6a"/><circle cx="5.5" cy="5.5" r="1.2" fill="#6a6a6a"/></svg>
<div class="t" style="left:1202px;top:347px;font-size:11px;letter-spacing:0.7px;color:#b8b8b8">Timer</div>
<div class="fld" style="left:1346px;top:344px;width:250px;height:16px"></div>
<div class="t" style="left:1350px;top:347px;font-size:10.5px;color:#c4c4c4">0</div>
<div class="a" style="left:1187px;top:362px;width:413px;height:1px;background:#292929;box-shadow:0 1px 0 #444"></div>
<div class="btn" style="left:1277px;top:374px;width:228px;height:22px;background:linear-gradient(#5c5c5c,#454545)"></div>
<div class="t" style="left:1341px;top:377px;font-size:13px;letter-spacing:0.65px;color:#c8c8c8">Add Component</div>
<!-- preview -->
<div class="a" style="left:1187px;top:427px;width:413px;height:18px;background:linear-gradient(#434343,#3a3a3a);border-top:1px solid #2a2a2a"></div>
<div class="t" style="left:1191px;top:430px;font-size:12px;font-weight:bold;letter-spacing:1.3px;color:#e0e0e0">player</div>
<div class="a" style="left:1236px;top:434px;width:356px;height:1px;background:#777;box-shadow:0 2px 0 #5a5a5a,0 4px 0 #1e1e1e"></div>
<div class="a" style="left:1187px;top:445px;width:413px;height:393px;background:#2a2a2a;border-top:1px solid #1c1c1c"></div>
<svg class="a" style="left:1187px;top:445px" width="413" height="393">
<defs><radialGradient id="glow" cx="0.5" cy="0.5" r="0.5"><stop offset="0" stop-color="#1f3a1f"/><stop offset="0.6" stop-color="#233023"/><stop offset="1" stop-color="#2a2a2a" stop-opacity="0"/></radialGradient></defs>
<ellipse cx="198" cy="174" rx="160" ry="110" fill="url(#glow)"/>
<path d="M124 174 L266 131 L266 153 L228 175 L266 199 L266 221 Z" fill="none" stroke="#17c017" stroke-width="7" stroke-linejoin="round"/>
</svg>
<div class="a" style="left:1577px;top:797px;width:17px;height:16px;border-radius:50%;background:#1f4a8f"></div>
<svg class="a" style="left:1580px;top:800px" width="11" height="10"><path d="M1 1H6L10 5L6 9L1 4Z" fill="#f0f0f0"/><circle cx="3" cy="3" r="0.9" fill="#1f4a8f"/></svg>
<div class="t" style="left:1192px;top:823px;font-size:11px;letter-spacing:0.67px;color:#b8b8b8">AssetBundle</div>
<div class="pop" style="left:1281px;top:821px;width:233px;height:15px"></div>
<div class="t" style="left:1286px;top:823px;font-size:10px;letter-spacing:0.7px;color:#c4c4c4">None</div>
<div class="ud" style="left:1503px;top:824px"></div>
<div class="pop" style="left:1521px;top:821px;width:74px;height:15px"></div>
<div class="t" style="left:1526px;top:823px;font-size:10px;letter-spacing:0.7px;color:#c4c4c4">None</div>
<div class="ud" style="left:1585px;top:824px"></div>
<!-- PROJECT -->
<div class="a" style="left:0;top:566px;width:1184px;height:22px;background:#292929"></div>
<div class="tab" style="left:0;top:571px;width:98px;height:18px"></div>
<svg class="a" style="left:8px;top:575px" width="12" height="10"><path d="M0.5 1.5H4.5L5.5 2.5H11.5V9.5H0.5Z" fill="#8a8a8a" stroke="#5a5a5a" stroke-width="0.8"/></svg>
<div class="t" style="left:23px;top:577px;font-size:11px;letter-spacing:0.95px;color:#c2c2c2">Project</div>
<svg class="a" style="left:110px;top:574px" width="9" height="11"><rect x="0.5" y="0.5" width="8" height="10" fill="#d8d8d8" stroke="#888" stroke-width="0.6"/><path d="M2 3H7M2 5H7M2 7H7" stroke="#555" stroke-width="0.8"/></svg>
<div class="t" style="left:124px;top:577px;font-size:11px;letter-spacing:0.75px;color:#c2c2c2">Console</div>
<svg class="a" style="left:1152px;top:576px" width="9" height="10"><path d="M2.5 4 V2.2 A2 2 0 0 1 6.5 2.2" fill="none" stroke="#8a8a8a" stroke-width="1.2"/><rect x="0.5" y="4.5" width="7" height="5" fill="#8a8a8a"/></svg>
<div class="dd" style="left:1166px;top:582px;border-left-width:2.5px;border-right-width:2.5px;border-top-color:#c0c0c0"></div>
<div class="a" style="left:1171px;top:581px;width:8px;height:1px;background:#c8c8c8;box-shadow:0 2px 0 #c8c8c8,0 4px 0 #c8c8c8"></div>
<div class="a" style="left:0;top:588px;width:1184px;height:17px;background:linear-gradient(#424242,#383838);border-top:1px solid #222;border-bottom:1px solid #222"></div>
<div class="t" style="left:13px;top:594px;font-size:10px;letter-spacing:0.8px;color:#c0c0c0">Create</div>
<div class="dd" style="left:51px;top:598px;border-left-width:2.5px;border-right-width:2.5px;border-top-width:3px;border-top-color:#999"></div>
<div class="a" style="left:58px;top:589px;width:1px;height:15px;background:#2e2e2e"></div>
<div class="a" style="left:802px;top:590px;width:299px;height:13px;border-radius:7px;background:#3e3e3e;box-shadow:inset 0 1px 1px #242424"></div>
<svg class="a" style="left:806px;top:592px" width="10" height="10"><circle cx="4" cy="4" r="2.8" fill="none" stroke="#888" stroke-width="1"/><path d="M6 6L8.5 8.5" stroke="#888" stroke-width="1"/></svg>
<div class="a" style="left:1109px;top:589px;width:1px;height:15px;background:#2e2e2e"></div>
<svg class="a" style="left:1116px;top:590px" width="13" height="12"><path d="M1 11L4.5 5L8 11Z" fill="#a0a0a0"/><circle cx="8.5" cy="3.5" r="2.5" fill="#a0a0a0"/><rect x="7" y="7" width="5" height="5" fill="#a0a0a0"/></svg>
<div class="a" style="left:1132px;top:589px;width:1px;height:15px;background:#2e2e2e"></div>
<svg class="a" style="left:1138px;top:590px" width="13" height="12"><path d="M1 1H6L12 7L7 12L1 6Z" fill="#a0a0a0"/><circle cx="3.5" cy="3.5" r="1" fill="#383838"/></svg>
<div class="a" style="left:1155px;top:589px;width:1px;height:15px;background:#2e2e2e"></div>
<svg class="a" style="left:1159px;top:590px" width="13" height="12"><path d="M6.5 0.5L8.2 4.5L12.5 4.7L9.2 7.4L10.3 11.5L6.5 9.2L2.7 11.5L3.8 7.4L0.5 4.7L4.8 4.5Z" fill="#8a8a8a"/></svg>
<div class="a" style="left:1176px;top:589px;width:1px;height:15px;background:#2e2e2e"></div>
<!-- left column -->
<div class="a" style="left:0;top:605px;width:199px;height:233px;background:#3a3a3a"></div>
<div class="a" style="left:199px;top:605px;width:2px;height:233px;background:#262626"></div>
<div class="foldd" style="left:4px;top:612px;border-left-width:4.5px;border-right-width:4.5px;border-top-width:7px;border-top-color:#5e5e5e"></div>
<svg class="a" style="left:16px;top:606px" width="16" height="16"><path d="M8 0.8L10.2 5.5L15.3 6L11.4 9.4L12.6 14.5L8 11.8L3.4 14.5L4.6 9.4L0.7 6L5.8 5.5Z" fill="#f6c81e" stroke="#d8a010" stroke-width="0.6"/></svg>
<div class="t" style="left:34.5px;top:610px;font-size:12px;font-weight:bold;letter-spacing:1.25px;color:#c8c8c8">Favorites</div>
<svg class="a" style="left:31px;top:624px" width="15" height="15"><circle cx="6" cy="6" r="4.3" fill="none" stroke="#e8d23a" stroke-width="2"/><path d="M9 9L13.5 13.5" stroke="#e8d23a" stroke-width="2.4"/></svg>
<div class="t" style="left:48px;top:626px;font-size:11px;letter-spacing:0.67px;color:#c0c0c0">All Materials</div>
<svg class="a" style="left:31px;top:640px" width="15" height="15"><circle cx="6" cy="6" r="4.3" fill="none" stroke="#e8d23a" stroke-width="2"/><path d="M9 9L13.5 13.5" stroke="#e8d23a" stroke-width="2.4"/></svg>
<div class="t" style="left:48px;top:642px;font-size:11px;letter-spacing:0.67px;color:#c0c0c0">All Models</div>
<svg class="a" style="left:31px;top:656px" width="15" height="15"><circle cx="6" cy="6" r="4.3" fill="none" stroke="#e8d23a" stroke-width="2"/><path d="M9 9L13.5 13.5" stroke="#e8d23a" stroke-width="2.4"/></svg>
<div class="t" style="left:48px;top:658px;font-size:11px;letter-spacing:0.67px;color:#c0c0c0">All Prefabs</div>
<svg class="a" style="left:31px;top:672px" width="15" height="15"><circle cx="6" cy="6" r="4.3" fill="none" stroke="#e8d23a" stroke-width="2"/><path d="M9 9L13.5 13.5" stroke="#e8d23a" stroke-width="2.4"/></svg>
<div class="t" style="left:48px;top:674px;font-size:11px;letter-spacing:0.67px;color:#c0c0c0">All Modified</div>
<svg class="a" style="left:31px;top:688px" width="15" height="15"><circle cx="6" cy="6" r="4.3" fill="none" stroke="#e8d23a" stroke-width="2"/><path d="M9 9L13.5 13.5" stroke="#e8d23a" stroke-width="2.4"/></svg>
<div class="t" style="left:48px;top:690px;font-size:11px;letter-spacing:0.67px;color:#c0c0c0">All Conflicted</div>
<div class="foldd" style="left:4px;top:722px;border-left-width:4.5px;border-right-width:4.5px;border-top-width:7px;border-top-color:#5e5e5e"></div>
<svg class="a" style="left:17px;top:719px" width="14" height="13"><path d="M0.5 1.5H5L6 3H13.5V12.5H0.5Z" fill="#9aa0a4" stroke="#555" stroke-width="0.6"/><rect x="0.5" y="4.5" width="13" height="8" fill="#b8bcc0"/><rect x="0.5" y="9" width="13" height="3.5" fill="#8a9094"/></svg>
<div class="t" style="left:35px;top:720px;font-size:12px;font-weight:bold;letter-spacing:0.8px;color:#c8c8c8">Assets</div>
<div class="a" style="left:0;top:765px;width:199px;height:17px;background:#484848"></div>
<svg class="a" style="left:31px;top:735px" width="14" height="13"><path d="M0.5 1.5H5L6 3H13.5V12.5H0.5Z" fill="#9aa0a4" stroke="#555" stroke-width="0.6"/><rect x="0.5" y="4.5" width="13" height="8" fill="#b8bcc0"/><rect x="0.5" y="9" width="13" height="3.5" fill="#8a9094"/></svg>
<div class="t" style="left:48px;top:737px;font-size:11px;letter-spacing:0.7px;color:#c0c0c0">Audio</div>
<svg class="a" style="left:31px;top:751px" width="14" height="13"><path d="M0.5 1.5H5L6 3H13.5V12.5H0.5Z" fill="#9aa0a4" stroke="#555" stroke-width="0.6"/><rect x="0.5" y="4.5" width="13" height="8" fill="#b8bcc0"/><rect x="0.5" y="9" width="13" height="3.5" fill="#8a9094"/></svg>
<div class="t" style="left:48px;top:753px;font-size:11px;letter-spacing:0.7px;color:#c0c0c0">font</div>
<svg class="a" style="left:31px;top:767px" width="14" height="13"><path d="M0.5 1.5H5L6 3H13.5V12.5H0.5Z" fill="#9aa0a4" stroke="#555" stroke-width="0.6"/><rect x="0.5" y="4.5" width="13" height="8" fill="#b8bcc0"/><rect x="0.5" y="9" width="13" height="3.5" fill="#8a9094"/></svg>
<div class="t" style="left:48px;top:769px;font-size:11px;letter-spacing:0.9px;color:#e4e4e4">Resources</div>
<svg class="a" style="left:31px;top:783px" width="14" height="13"><path d="M0.5 1.5H5L6 3H13.5V12.5H0.5Z" fill="#9aa0a4" stroke="#555" stroke-width="0.6"/><rect x="0.5" y="4.5" width="13" height="8" fill="#b8bcc0"/><rect x="0.5" y="9" width="13" height="3.5" fill="#8a9094"/></svg>
<div class="t" style="left:48px;top:785px;font-size:11px;letter-spacing:0.7px;color:#c0c0c0">scripts</div>
<svg class="a" style="left:31px;top:799px" width="14" height="13"><path d="M0.5 1.5H5L6 3H13.5V12.5H0.5Z" fill="#9aa0a4" stroke="#555" stroke-width="0.6"/><rect x="0.5" y="4.5" width="13" height="8" fill="#b8bcc0"/><rect x="0.5" y="9" width="13" height="3.5" fill="#8a9094"/></svg>
<div class="t" style="left:48px;top:801px;font-size:11px;letter-spacing:0.7px;color:#c0c0c0">sprites</div>
<!-- right area -->
<div class="a" style="left:201px;top:605px;width:982px;height:233px;background:#393939"></div>
<div class="a" style="left:201px;top:605px;width:982px;height:18px;background:#3d3d3d;border-bottom:1px solid #2a2a2a"></div>
<div class="t" style="left:207px;top:610px;font-size:11px;letter-spacing:0.7px;color:#b0b0b0">Assets</div>
<svg class="a" style="left:249px;top:611px" width="6" height="8"><path d="M0 0L6 4L0 8Z" fill="#8a8a8a"/></svg>
<div class="t" style="left:261px;top:609px;font-size:12px;font-weight:bold;letter-spacing:0.55px;color:#d0d0d0">Resources</div>
<div class="a" style="left:218px;top:636px;width:52px;height:51px;background:#4f4f4f;box-shadow:0 0 0 1px #444"></div>
<div class="a" style="left:264px;top:654px;width:13px;height:13px;border-radius:50%;border:1px solid #a8a8a8;background:#3a3a3a"></div>
<svg class="a" style="left:268px;top:657px" width="6" height="7"><path d="M0.5 0.5L5.5 3.5L0.5 6.5Z" fill="#eee"/></svg>
<div class="t" style="left:224.0px;top:693px;font-size:10px;letter-spacing:0.7px;color:#c4c4c4">asteroid</div>
<div class="a" style="left:285px;top:636px;width:52px;height:51px;background:#4f4f4f;box-shadow:0 0 0 1px #444"></div>
<div class="a" style="left:331px;top:654px;width:13px;height:13px;border-radius:50%;border:1px solid #a8a8a8;background:#3a3a3a"></div>
<svg class="a" style="left:335px;top:657px" width="6" height="7"><path d="M0.5 0.5L5.5 3.5L0.5 6.5Z" fill="#eee"/></svg>
<div class="t" style="left:295.0px;top:693px;font-size:10px;letter-spacing:0.7px;color:#c4c4c4">bullet</div>
<div class="a" style="left:352px;top:636px;width:52px;height:51px;background:#4f4f4f;box-shadow:0 0 0 1px #444"></div>
<div class="a" style="left:398px;top:654px;width:13px;height:13px;border-radius:50%;border:1px solid #a8a8a8;background:#3a3a3a"></div>
<svg class="a" style="left:402px;top:657px" width="6" height="7"><path d="M0.5 0.5L5.5 3.5L0.5 6.5Z" fill="#eee"/></svg>
<div class="t" style="left:359.5px;top:693px;font-size:10px;letter-spacing:0.7px;color:#c4c4c4">enemy</div>
<div class="a" style="left:419px;top:636px;width:52px;height:51px;background:#4f4f4f;box-shadow:0 0 0 1px #444"></div>
<div class="a" style="left:465px;top:654px;width:13px;height:13px;border-radius:50%;border:1px solid #a8a8a8;background:#3a3a3a"></div>
<svg class="a" style="left:469px;top:657px" width="6" height="7"><path d="M0.5 0.5L5.5 3.5L0.5 6.5Z" fill="#eee"/></svg>
<div class="t" style="left:425.0px;top:693px;font-size:10px;letter-spacing:0.7px;color:#c4c4c4">enemy1</div>
<div class="a" style="left:486px;top:636px;width:52px;height:51px;background:#4f4f4f;box-shadow:0 0 0 1px #444"></div>
<div class="a" style="left:532px;top:654px;width:13px;height:13px;border-radius:50%;border:1px solid #a8a8a8;background:#3a3a3a"></div>
<svg class="a" style="left:536px;top:657px" width="6" height="7"><path d="M0.5 0.5L5.5 3.5L0.5 6.5Z" fill="#eee"/></svg>
<div class="t" style="left:492.0px;top:693px;font-size:10px;letter-spacing:0.7px;color:#c4c4c4">enemy2</div>
<div class="a" style="left:553px;top:636px;width:52px;height:51px;background:#4f4f4f;box-shadow:0 0 0 1px #444"></div>
<div class="a" style="left:599px;top:654px;width:13px;height:13px;border-radius:50%;border:1px solid #a8a8a8;background:#3a3a3a"></div>
<svg class="a" style="left:603px;top:657px" width="6" height="7"><path d="M0.5 0.5L5.5 3.5L0.5 6.5Z" fill="#eee"/></svg>
<div class="t" style="left:559.0px;top:693px;font-size:10px;letter-spacing:0.7px;color:#c4c4c4">enemy3</div>
<div class="a" style="left:620px;top:636px;width:52px;height:51px;background:#4f4f4f;box-shadow:0 0 0 1px #444"></div>
<div class="a" style="left:666px;top:654px;width:13px;height:13px;border-radius:50%;border:1px solid #a8a8a8;background:#3a3a3a"></div>
<svg class="a" style="left:670px;top:657px" width="6" height="7"><path d="M0.5 0.5L5.5 3.5L0.5 6.5Z" fill="#eee"/></svg>
<div class="t" style="left:618.0px;top:693px;font-size:10px;letter-spacing:0.7px;color:#c4c4c4">enemyBul...</div>
<div class="a" style="left:687px;top:636px;width:52px;height:51px;background:#4f4f4f;box-shadow:0 0 0 1px #444"></div>
<div class="a" style="left:733px;top:654px;width:13px;height:13px;border-radius:50%;border:1px solid #a8a8a8;background:#3a3a3a"></div>
<svg class="a" style="left:737px;top:657px" width="6" height="7"><path d="M0.5 0.5L5.5 3.5L0.5 6.5Z" fill="#eee"/></svg>
<div class="t" style="left:685.0px;top:693px;font-size:10px;letter-spacing:0.7px;color:#c4c4c4">enemyBul...</div>
<div class="a" style="left:754px;top:636px;width:52px;height:51px;background:#4a4f5e;box-shadow:0 0 0 1px #444"></div>
<div class="a" style="left:800px;top:654px;width:13px;height:13px;border-radius:50%;border:1px solid #a8a8a8;background:#3a3a3a"></div>
<svg class="a" style="left:804px;top:657px" width="6" height="7"><path d="M0.5 0.5L5.5 3.5L0.5 6.5Z" fill="#eee"/></svg>
<div class="a" style="left:746px;top:690px;width:66px;height:14px;border-radius:7px;background:#575757"></div>
<div class="t" style="left:763.0px;top:693px;font-size:10px;letter-spacing:0.7px;color:#f0f0f0">player</div>
<div class="a" style="left:821px;top:636px;width:52px;height:51px;background:#4f4f4f;box-shadow:0 0 0 1px #444"></div>
<div class="t" style="left:836.5px;top:693px;font-size:10px;letter-spacing:0.7px;color:#c4c4c4">star</div>
<div class="a" style="left:309px;top:649px;width:2px;height:24px;border-radius:1px;background:#2aa82a;box-shadow:0 0 5px 1px rgba(40,160,40,0.45)"></div>
<div class="a" style="left:645px;top:649px;width:1.5px;height:24px;background:#30b8a0;box-shadow:0 0 5px 1px rgba(40,160,140,0.4)"></div>
<div class="a" style="left:712px;top:650px;width:1.5px;height:22px;background:#c0c030;box-shadow:0 0 5px 1px rgba(170,170,40,0.4)"></div>
<svg class="a" style="left:768px;top:648px" width="22" height="22"><path d="M3 16L15 6L15 16Z" fill="none" stroke="#1ec01e" stroke-width="2" stroke-linejoin="round"/><path d="M8 12L15 12" stroke="#1ec01e" stroke-width="1.5"/></svg>
<svg class="a" style="left:836px;top:647px" width="20" height="30"><path d="M11 2L13 9L17 9L12 15L14 24L8 17L3 19L7 12L4 8L9 8Z" fill="#f8d818" stroke="#d08010" stroke-width="0.8"/></svg>
<!-- bottom status of project -->
<div class="a" style="left:201px;top:822px;width:982px;height:16px;background:#3c3c3c;border-top:1px solid #2a2a2a"></div>
<svg class="a" style="left:206px;top:824px" width="12" height="12"><path d="M6 0.5L11.5 3V9L6 11.5L0.5 9V3Z" fill="#4aa0e0"/><path d="M6 0.5L11.5 3L6 5.5L0.5 3Z" fill="#9ad4f8"/><path d="M0.5 3L6 5.5V11.5L0.5 9Z" fill="#62b4ec"/></svg>
<div class="t" style="left:221px;top:825px;font-size:11px;letter-spacing:1px;color:#c4c4c4">player.prefab</div>
<div class="a" style="left:1112px;top:828px;width:55px;height:2px;background:#2a2a2a;box-shadow:0 1px 0 #4a4a4a"></div>
<div class="a" style="left:1133px;top:824px;width:10px;height:10px;border-radius:50%;background:#5a5a5a;border:1px solid #2a2a2a"></div>
<div class="a" style="left:1183px;top:588px;width:4px;height:250px;background:#232323"></div>
<!-- status bar -->
<div class="a" style="left:0;top:838px;width:1600px;height:22px;background:#2b2b2b"></div>
<!-- taskbar -->
<div class="a" style="left:0;top:860px;width:1600px;height:40px;background:#05070b"></div>
<svg class="a" style="left:16px;top:872px" width="17" height="17"><path d="M0 2.4L6.8 1.5V8H0Z M7.8 1.3L16.5 0V8H7.8Z M0 9H6.8V15.5L0 14.6Z M7.8 9H16.5V17L7.8 15.7Z" fill="#fff"/></svg>
<svg class="a" style="left:62px;top:866px" width="26" height="26"><circle cx="13" cy="13" r="12" fill="#fff"/><circle cx="13" cy="13" r="10.6" fill="#1d8a42"/><path d="M7.5 7H11V15C11 17 14 17 14 15V7H17.5V21H14.5V18.8C13 20 10 20 9 18.5L8.5 22H6Z" fill="#fff"/></svg>
<svg class="a" style="left:112px;top:867px" width="24" height="24" viewBox="0 0 24 24"><circle cx="12" cy="12" r="11" fill="#db4437"/><path d="M12 12 L2.47 6.5 A11 11 0 0 0 12 23 Z" fill="#0f9d58"/><path d="M12 12 L12 23 A11 11 0 0 0 21.53 6.5 Z" fill="#f4b400"/><path d="M12 12 L2.47 6.5 A11 11 0 0 1 21.53 6.5 Z" fill="#db4437"/><circle cx="12" cy="12" r="5" fill="#fff"/><circle cx="12" cy="12" r="3.9" fill="#4285f4"/></svg>
<svg class="a" style="left:160px;top:864px" width="30" height="30"><path d="M6.2 15 L17.5 7.8 L21.8 10.8 V20.2 L17.5 23.2 Z" fill="#f4f4f4"/><path d="M15.8 15 L5.5 15 M15.8 15 L18.9 8.6 M15.8 15 L18.9 22" stroke="#05070b" stroke-width="1.4"/></svg>
<div class="a" style="left:104px;top:898px;width:40px;height:2px;background:#8ab4d8"></div>
<div class="a" style="left:153px;top:898px;width:40px;height:2px;background:#8ab4d8"></div>
<svg class="a" style="left:1476px;top:874px" width="13" height="8"><path d="M1 7L6.5 1.5L12 7" fill="none" stroke="#e8e8e8" stroke-width="1.2"/></svg>
<div class="t" style="left:1501px;top:874px;font-size:12px;color:#f0f0f0">ENG</div>
<div class="t" style="left:1539px;top:865px;font-size:12px;color:#f0f0f0;letter-spacing:-0.2px">11:36 PM</div>
<div class="t" style="left:1534px;top:882px;font-size:12px;color:#f0f0f0;letter-spacing:-0.3px">12/12/2017</div>
<div class="a" style="left:1595px;top:860px;width:1px;height:40px;background:#333"></div>
</body></html>
